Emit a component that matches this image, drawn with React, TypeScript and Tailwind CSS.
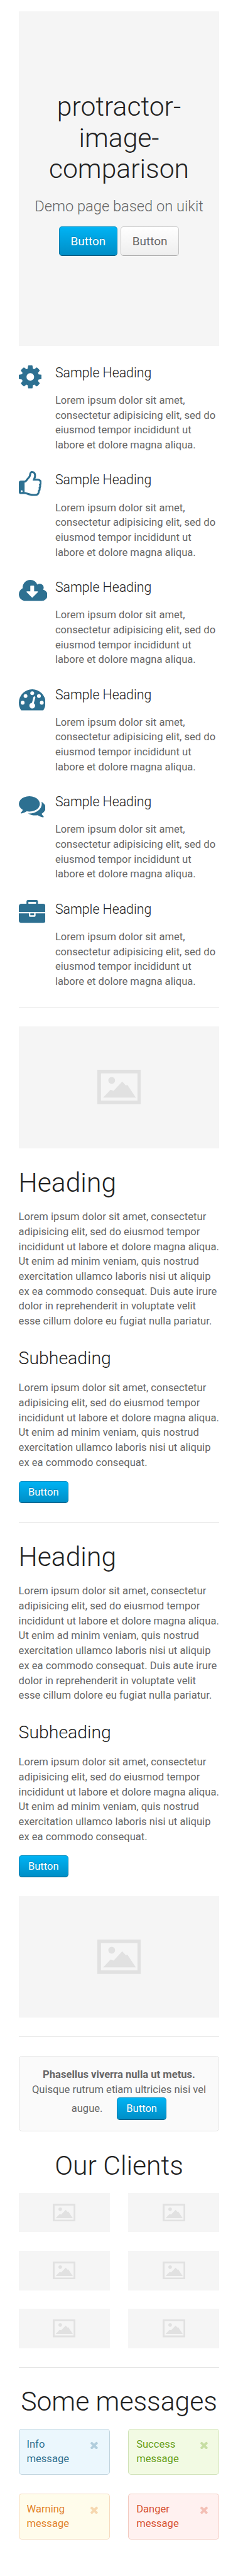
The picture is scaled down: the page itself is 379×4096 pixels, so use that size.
import { ReactNode } from "react";

const SHORT =
  "Lorem ipsum dolor sit amet, consectetur adipisicing elit, sed do eiusmod tempor incididunt ut labore et dolore magna aliqua.";
const MEDIUM = `${SHORT} Ut enim ad minim veniam, quis nostrud exercitation ullamco laboris nisi ut aliquip ex ea commodo consequat.`;
const LONG = `${MEDIUM} Duis aute irure dolor in reprehenderit in voluptate velit esse cillum dolore eu fugiat nulla pariatur.`;

function Icon({ width, children }: { width: number; children: ReactNode }) {
  return (
    <svg
      className="block h-9 w-auto fill-[#2d7091]"
      viewBox={`0 0 ${width} 1792`}
    >
      {children}
    </svg>
  );
}

const features: { id: string; icon: ReactNode }[] = [
  {
    id: "cog",
    icon: (
      <Icon width={1536}>
        <path
          transform="translate(-128 0)"
          d="M1152 896q0-106-75-181t-181-75-181 75-75 181 75 181 181 75 181-75 75-181zm512-109v222q0 12-8 23t-20 13l-185 28q-19 54-39 91 35 50 107 138 10 12 10 25t-9 23q-27 37-99 108t-94 71q-12 0-26-9l-138-108q-44 23-91 38-16 136-29 186-7 28-36 28h-222q-14 0-24.5-8.5t-11.5-21.5l-28-184q-49-16-90-37l-141 107q-10 9-25 9-14 0-25-11-126-114-165-168-7-10-7-23 0-12 8-23 15-21 51-66.5t54-70.5q-27-50-41-99l-183-27q-13-2-21-12.5t-8-23.5v-222q0-12 8-23t19-13l186-28q14-46 39-92-40-57-107-138-10-12-10-24 0-10 9-23 26-36 98.5-107.5t94.5-71.5q13 0 26 10l138 107q44-23 91-38 16-136 29-186 7-28 36-28h222q14 0 24.5 8.5t11.5 21.5l28 184q49 16 90 37l142-107q9-9 24-9 13 0 25 10 129 119 165 170 7 8 7 22 0 12-8 23-15 21-51 66.5t-54 70.5q26 50 41 98l183 28q13 2 21 12.5t8 23.5z"
        />
      </Icon>
    ),
  },
  {
    id: "thumbs-up",
    icon: (
      <Icon width={1536}>
        <path
          transform="translate(-128 0)"
          d="M384 1344q0-26-19-45t-45-19-45 19-19 45 19 45 45 19 45-19 19-45zm1152-576q0-51-39-89.5t-89-38.5h-352q0-58 48-159.5t48-160.5q0-98-32-145t-128-47q-26 26-38 85t-30.5 125.5-59.5 109.5q-22 23-77 91-4 5-23 30t-31.5 41-34.5 42.5-40 44-38.5 35.5-40 27-35.5 9h-32v640h32q13 0 31.5 3t33 6.5 38 11 35 11.5 35.5 12.5 29 10.5q211 73 342 73h121q192 0 192-167 0-26-5-56 30-16 47.5-52.5t17.5-73.5-18-69q53-50 53-119 0-25-10-55.5t-25-47.5q32-1 53.5-47t21.5-81zm128-1q0 89-49 163 9 33 9 69 0 77-38 144 3 21 3 43 0 101-60 178 1 139-85 219.5t-227 80.5h-129q-96 0-189.5-22.5t-216.5-65.5q-116-40-138-40h-288q-53 0-90.5-37.5t-37.5-90.5v-640q0-53 37.5-90.5t90.5-37.5h274q36-24 137-155 58-75 107-128 24-25 35.5-85.5t30.5-126.5 62-108q39-37 90-37 84 0 151 32.5t102 101.5 35 186q0 93-48 192h176q104 0 180 76t76 179z"
        />
      </Icon>
    ),
  },
  {
    id: "cloud-download",
    icon: (
      <Icon width={1920}>
        <path d="M1280 928q0-14-9-23t-23-9h-224v-352q0-13-9.5-22.5t-22.5-9.5h-192q-13 0-22.5 9.5t-9.5 22.5v352h-224q-13 0-22.5 9.5t-9.5 22.5q0 14 9 23l352 352q9 9 23 9t23-9l351-351q10-12 10-24zm640 224q0 159-112.5 271.5t-271.5 112.5h-1088q-185 0-316.5-131.5t-131.5-316.5q0-130 70-240t188-165q-2-30-2-43 0-212 150-362t362-150q156 0 285.5 87t188.5 231q71-62 166-62 106 0 181 75t75 181q0 76-41 138 130 31 213.5 135.5t83.5 238.5z" />
      </Icon>
    ),
  },
  {
    id: "tachometer",
    icon: (
      <Icon width={1792}>
        <path d="M1792 1152q0 261-141 483-19 29-54 29h-1402q-35 0-54-29-141-221-141-483 0-182 71-348t191-286 286-191 348-71 348 71 286 191 191 286 71 348z" />
        <g className="fill-white">
          <circle cx="256" cy="1152" r="128" />
          <circle cx="448" cy="704" r="128" />
          <circle cx="896" cy="512" r="128" />
          <circle cx="1344" cy="704" r="128" />
          <circle cx="1536" cy="1152" r="128" />
          <path d="M1004 1185l101-382q6-26-7.5-48.5t-38.5-29.5-48 6.5-30 39.5l-101 382q-60 5-107 43.5t-63 98.5q-20 77 20 146t117 89 146-20 89-117q16-60-6-117t-72-91z" />
        </g>
      </Icon>
    ),
  },
  {
    id: "comments",
    icon: (
      <Icon width={1792}>
        <path
          transform="translate(0 1536) scale(1 -1)"
          d="M1408 768q0 -139 -94 -257t-256.5 -186.5t-353.5 -68.5q-86 0 -176 16q-124 -88 -278 -128q-36 -9 -86 -16h-3q-11 0 -20.5 8t-11.5 21q-1 3 -1 6.5t0.5 6.5t2 6l2.5 5t3.5 5.5t4 5t4.5 5t4 4.5q5 6 23 25t26 29.5t22.5 29t25 38.5t20.5 44q-124 72 -195 177t-71 224q0 139 94 257t256.5 186.5t353.5 68.5t353.5 -68.5t256.5 -186.5t94 -257zM1792 512q0 -120 -71 -224.5t-195 -176.5q10 -24 20.5 -44t25 -38.5t22.5 -29t26 -29.5t23 -25q1 -1 4 -4.5t4.5 -5t4 -5t3.5 -5.5l2.5 -5t2 -6t0.5 -6.5t-1 -6.5q-3 -14 -13 -22t-22 -7q-50 7 -86 16q-154 40 -278 128q-90 -16 -176 -16q-271 0 -472 132q58 -4 88 -4q161 0 309 45t264 129q125 92 192 212t67 254q0 77 -23 152q129 -71 204 -178t75 -230z"
        />
      </Icon>
    ),
  },
  {
    id: "briefcase",
    icon: (
      <Icon width={1792}>
        <path
          transform="translate(0 1536) scale(1 -1)"
          d="M640 1280h512v128h-512v-128zM1792 640v-480q0 -66 -47 -113t-113 -47h-1472q-66 0 -113 47t-47 113v480h672v-160q0 -26 19 -45t45 -19h320q26 0 45 19t19 45v160h672zM1024 640v-128h-256v128h256zM1792 1120v-384h-1792v384q0 66 47 113t113 47h352v160q0 40 28 68t68 28h576q40 0 68 -28t28 -68v-160h352q66 0 113 -47t47 -113z"
        />
      </Icon>
    ),
  },
];

function Picture({ className }: { className: string }) {
  return (
    <svg className={className} viewBox="0 0 58.8 46.2" fill="#e1e1e1">
      <path fillRule="evenodd" d="M0 0H58.8V46.2H0ZM4.9 4.9V41.4H54V4.9Z" />
      <circle cx="19.3" cy="14.3" r="4.6" />
      <path d="M7.8 37.4L17.8 26.8L21.8 28.2L33.5 15.8L38.4 21.1L40.4 20.2L51.8 37.4Z" />
    </svg>
  );
}

function Placeholder() {
  return (
    <div className="flex h-[163.6px] items-center justify-center bg-[#f5f5f5]">
      <Picture className="h-[46.2px] w-[58.8px]" />
    </div>
  );
}

const primary =
  "inline-block rounded-[4px] border border-black/20 border-b-black/40 bg-linear-to-b from-[#00b4f5] to-[#008dc5] bg-origin-border text-white [text-shadow:0_-1px_0_rgba(0,0,0,0.2)]";

function Button({ className = "" }: { className?: string }) {
  return (
    <a className={`${primary} h-[30px] w-[67px] text-center text-sm leading-7 ${className}`}>
      Button
    </a>
  );
}

function Rule() {
  return <div className="my-[25px] h-[0.85px] bg-[#e5e5e5]" />;
}

function Article() {
  return (
    <div className="pt-[0.5px]">
      <h1 className="text-4xl leading-[42px] font-light text-[#222]">Heading</h1>
      <p className="mt-[15px] text-sm leading-5 tracking-[0.015px]">{LONG}</p>
      <h2 className="mt-[24.7px] text-2xl leading-[30px] font-light text-[#222]">
        Subheading
      </h2>
      <p className="mt-[15px] text-sm leading-5 tracking-[0.015px]">{MEDIUM}</p>
      <div className="mt-[14.4px] flex">
        <Button />
      </div>
    </div>
  );
}

const alerts = [
  { label: "Info", tone: "border-[#2d7091]/30 bg-[#ebf7fd] text-[#2d7091]" },
  { label: "Success", tone: "border-[#659f13]/30 bg-[#f2fae3] text-[#659f13]" },
  { label: "Warning", tone: "border-[#e28327]/30 bg-[#fffceb] text-[#e28327]" },
  { label: "Danger", tone: "border-[#d85030]/30 bg-[#fff1f0] text-[#d85030]" },
];

export default function App() {
  return (
    <div className="h-[3458.4px] w-[320px] overflow-hidden bg-white px-[25px] pt-[15px] font-[Roboto,sans-serif] text-[#666] [zoom:1.184375]">
      <section className="flex h-[449px] flex-col items-center bg-[#f5f5f5] pt-[107.4px] text-center">
        <h1 className="text-4xl leading-[42px] font-light text-[#222]">
          protractor-
          <br />
          image-
          <br />
          comparison
        </h1>
        <p className="mt-[15px] text-xl leading-7 font-light whitespace-nowrap">
          Demo page based on uikit
        </p>
        <div className="mt-[12.6px] flex gap-1 text-base leading-[38px]">
          <a className={`${primary} h-10 w-[79px]`}>Button</a>
          <a className="h-10 w-[79px] rounded-[4px] border border-black/20 border-b-black/30 bg-linear-to-b from-white to-[#eee] bg-origin-border [text-shadow:0_1px_0_#fff]">
            Button
          </a>
        </div>
      </section>

      <section className="mt-6 flex flex-col gap-[25px]">
        {features.map((f) => (
          <div key={f.id} className="flex h-[119px]">
            <div className="w-[49.2px] shrink-0">{f.icon}</div>
            <div className="w-[220.8px] pt-[0.8px]">
              <h3 className="text-lg leading-6 font-light text-[#222]">Sample Heading</h3>
              <p className="mt-[15px] text-sm leading-5 tracking-[0.015px]">{SHORT}</p>
            </div>
          </div>
        ))}
      </section>

      <Rule />
      <Placeholder />
      <div className="mt-[25px]">
        <Article />
      </div>
      <Rule />
      <Article />
      <div className="mt-[25px]">
        <Placeholder />
      </div>
      <Rule />

      <section className="h-[101.9px] rounded-[4px] border border-[#e5e5e5] bg-[#fafafa] pt-[14.7px] text-center text-sm leading-5">
        <strong className="block font-bold">Phasellus viverra nulla ut metus.</strong>
        <div>Quisque rutrum etiam ultricies nisi vel</div>
        <div className="mt-[0.6px] flex items-center justify-center gap-[19px]">
          <span>augue.</span>
          <Button />
        </div>
      </section>

      <section className="mt-[25px]">
        <h2 className="text-center text-4xl leading-[42px] font-light text-[#222]">
          Our Clients
        </h2>
        <div className="mt-[15px] grid grid-cols-2 gap-[25px]">
          {[0, 1, 2, 3, 4, 5].map((n) => (
            <div key={n} className="flex h-[53px] items-center justify-center bg-[#f5f5f5]">
              <Picture className="h-6 w-[30.6px]" />
            </div>
          ))}
        </div>
      </section>

      <Rule />

      <section>
        <h2 className="text-center text-4xl leading-[42px] font-light whitespace-nowrap text-[#222]">
          Some messages
        </h2>
        <div className="mt-[15px] grid grid-cols-2 gap-[25px]">
          {alerts.map((a) => (
            <div
              key={a.label}
              className={`flex h-[62px] justify-between rounded-[4px] border bg-clip-padding py-[10px] pr-[15px] pl-[10px] text-sm leading-5 [text-shadow:0_1px_0_#fff] ${a.tone}`}
            >
              <p>
                {a.label}
                <br />
                message
              </p>
              <svg className="mt-[6px] size-[10px] fill-current opacity-30" viewBox="302 302 1188 1188">
                <path d="M1490 1322q0 40-28 68l-136 136q-28 28-68 28t-68-28l-294-294-294 294q-28 28-68 28t-68-28l-136-136q-28-28-28-68t28-68l294-294-294-294q-28-28-28-68t28-68l136-136q28-28 68-28t68 28l294 294 294-294q28-28 68-28t68 28l136 136q28 28 28 68t-28 68l-294 294 294 294q28 28 28 68z" />
              </svg>
            </div>
          ))}
        </div>
      </section>
    </div>
  );
}
